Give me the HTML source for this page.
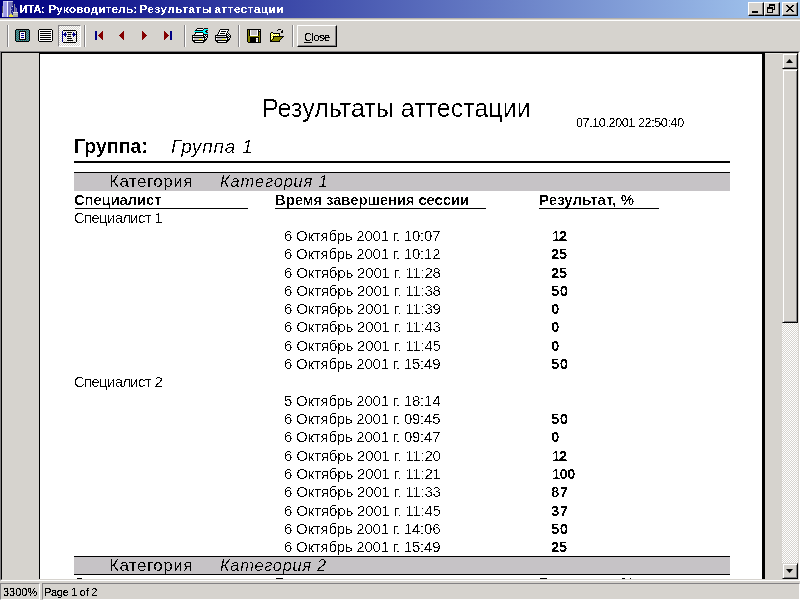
<!DOCTYPE html>
<html><head><meta charset="utf-8"><title>ИТА: Руководитель: Результаты аттестации</title>
<style>
*{margin:0;padding:0;box-sizing:border-box}
html,body{width:800px;height:600px;overflow:hidden;background:#d6d3ce;font-family:"Liberation Sans",sans-serif;}
body{position:relative}
.abs{position:absolute}
#titlebar{left:0;top:0;width:800px;height:18px;background:linear-gradient(90deg,#000080 0%,#a6caf0 100%);}
#title{left:20px;top:3px;color:#fff;font-weight:bold;font-size:11.5px;line-height:13px;white-space:nowrap}
.t,.ui,#title{will-change:transform}
.t{position:absolute;white-space:nowrap;color:#000;line-height:1;margin-top:-0.8465em}
.h1{font-size:25px}
.dt{font-size:12.5px}
.gb{font-size:19.5px;font-weight:bold}
.gi{font-size:19px;font-style:italic}
.cat{font-size:17px}
.cati{font-size:16.5px;font-style:italic}
.hd{font-size:15px;font-weight:bold}
.rg{font-size:15px}
.rb{font-size:15px;font-weight:bold}
.ui{position:absolute;white-space:nowrap;color:#000;font-size:11px;line-height:1;margin-top:-0.8465em}
#page{left:40px;top:54px;width:722px;height:525px;background:#fff}
.wbtn{position:absolute;top:2px;width:16px;height:14px;background:#d6d3ce;border:1px solid;border-color:#fff #000 #000 #fff;box-shadow:inset -1px -1px 0 #848284}
.sep{position:absolute;top:25px;width:2px;height:22px;border-left:1px solid #848284;border-right:1px solid #fff}
.sbtn{position:absolute;left:782px;width:16px;height:16px;background:#d6d3ce;border:1px solid;border-color:#d6d3ce #000 #000 #d6d3ce;box-shadow:inset 1px 1px 0 #fff, inset -1px -1px 0 #848284}
.t{filter:url(#th)}
.ui{filter:url(#th2)}
.t.dt,#title{filter:url(#th3)}
</style></head><body>
<svg width="0" height="0" style="position:absolute"><filter id="th" x="0" y="0" width="100%" height="100%" color-interpolation-filters="sRGB"><feComponentTransfer><feFuncA type="discrete" tableValues="0 0 0 1 1"/></feComponentTransfer></filter><filter id="th2" x="0" y="0" width="100%" height="100%" color-interpolation-filters="sRGB"><feComponentTransfer><feFuncA type="discrete" tableValues="0 0 1 1 1"/></feComponentTransfer></filter><filter id="th3" x="0" y="0" width="100%" height="100%" color-interpolation-filters="sRGB"><feComponentTransfer><feFuncA type="discrete" tableValues="0 1"/></feComponentTransfer></filter></svg>
<!-- title bar -->
<div id="titlebar" class="abs"></div>
<svg class="abs" style="left:0;top:0" width="20" height="18" shape-rendering="crispEdges">
<rect x="3" y="1" width="10" height="1" fill="#c6c7e7"/>
<rect x="3" y="2" width="4" height="15" fill="#9c9ae7"/>
<rect x="2" y="6" width="1" height="7" fill="#52515a"/>
<rect x="2" y="13" width="1" height="4" fill="#d6d7de"/>
<rect x="3" y="2" width="1" height="15" fill="#b5b6ef"/>
<rect x="7" y="1" width="1" height="16" fill="#f7f7ff"/>
<rect x="8" y="2" width="4" height="15" fill="#7371bd"/>
<rect x="12" y="2" width="1" height="5" fill="#52518c"/>
<rect x="10" y="7" width="3" height="8" fill="#21248c"/>
<rect x="10" y="7" width="1" height="8" fill="#9c9ece"/>
<rect x="12" y="6" width="1" height="1" fill="#dedfef"/>
<rect x="11" y="9" width="1" height="1" fill="#8c8ec6"/><rect x="12" y="11" width="1" height="1" fill="#8c8ec6"/><rect x="11" y="13" width="1" height="1" fill="#8c8ec6"/>
<rect x="9" y="15" width="4" height="2" fill="#e7e339"/><rect x="10" y="14" width="2" height="1" fill="#d6d34a"/>
<rect x="14" y="4" width="1" height="8" fill="#8c8a9c"/>
<rect x="15" y="7" width="1" height="5" fill="#5a59a5"/><rect x="16" y="8" width="1" height="4" fill="#7b79b5"/>
<rect x="13" y="12" width="5" height="1" fill="#e7e7e7"/>
<rect x="13" y="13" width="5" height="4" fill="#a5a6a5"/>
<rect x="13" y="14" width="5" height="1" fill="#bdbebd"/>
</svg>
<div id="title" class="abs"><span class="abs" style="left:-0.5px;letter-spacing:-.42px">ИТА: </span><span class="abs" style="left:28.4px;letter-spacing:.31px">Руководитель: </span><span class="abs" style="left:119.4px;letter-spacing:.67px">Результаты </span><span class="abs" style="left:194.5px;letter-spacing:.6px">аттестации</span></div>
<div class="wbtn" style="left:748px"><div class="abs" style="left:3px;top:8px;width:6px;height:2px;background:#000"></div></div>
<div class="wbtn" style="left:764px">
  <div class="abs" style="left:4px;top:1px;width:6px;height:6px;border:1px solid #000;border-top-width:2px"></div>
  <div class="abs" style="left:2px;top:4px;width:6px;height:6px;border:1px solid #000;border-top-width:2px;background:#d6d3ce"></div>
</div>
<div class="wbtn" style="left:782px"><svg class="abs" style="left:3px;top:2px" width="8" height="7" shape-rendering="crispEdges" fill="#000"><rect x="0" y="0" width="2" height="1"/><rect x="6" y="0" width="2" height="1"/><rect x="1" y="1" width="2" height="1"/><rect x="5" y="1" width="2" height="1"/><rect x="2" y="2" width="4" height="1"/><rect x="3" y="3" width="2" height="1"/><rect x="2" y="4" width="4" height="1"/><rect x="1" y="5" width="2" height="1"/><rect x="5" y="5" width="2" height="1"/><rect x="0" y="6" width="2" height="1"/><rect x="6" y="6" width="2" height="1"/></svg></div>
<div class="abs" style="left:0;top:18px;width:800px;height:1px;background:#b5b2ad"></div>
<div class="abs" style="left:0;top:19px;width:800px;height:1px;background:#d6d3ce"></div>
<div class="abs" style="left:0;top:20px;width:800px;height:1px;background:#fff"></div>
<!-- toolbar -->
<div class="sep" style="left:7px"></div>
<div class="sep" style="left:84px"></div>
<div class="sep" style="left:184px"></div>
<div class="sep" style="left:238px"></div>
<div class="sep" style="left:292px"></div>
<div class="abs" style="left:58px;top:25px;width:23px;height:22px;border:1px solid;border-color:#848284 #fff #fff #848284;background:repeating-conic-gradient(#fff 0% 25%,#d6d3ce 0% 50%) 0 0/2px 2px"></div><svg class="abs" style="left:15px;top:29px" width="15" height="13" shape-rendering="crispEdges"><rect x="1" y="0" width="13" height="1" fill="#000"/><rect x="0" y="1" width="1" height="1" fill="#000"/><rect x="1" y="1" width="1" height="1" fill="#008284"/><rect x="2" y="1" width="1" height="1" fill="#848284"/><rect x="3" y="1" width="1" height="1" fill="#008284"/><rect x="4" y="1" width="1" height="1" fill="#848284"/><rect x="5" y="1" width="1" height="1" fill="#008284"/><rect x="6" y="1" width="1" height="1" fill="#848284"/><rect x="7" y="1" width="1" height="1" fill="#008284"/><rect x="8" y="1" width="1" height="1" fill="#848284"/><rect x="9" y="1" width="1" height="1" fill="#008284"/><rect x="10" y="1" width="1" height="1" fill="#848284"/><rect x="11" y="1" width="1" height="1" fill="#008284"/><rect x="12" y="1" width="1" height="1" fill="#848284"/><rect x="13" y="1" width="1" height="1" fill="#008284"/><rect x="14" y="1" width="1" height="1" fill="#000"/><rect x="0" y="2" width="1" height="1" fill="#000"/><rect x="1" y="2" width="1" height="1" fill="#848284"/><rect x="2" y="2" width="1" height="1" fill="#008284"/><rect x="3" y="2" width="1" height="1" fill="#848284"/><rect x="4" y="2" width="7" height="1" fill="#000"/><rect x="11" y="2" width="1" height="1" fill="#848284"/><rect x="12" y="2" width="1" height="1" fill="#008284"/><rect x="13" y="2" width="1" height="1" fill="#848284"/><rect x="14" y="2" width="1" height="1" fill="#000"/><rect x="0" y="3" width="1" height="1" fill="#000"/><rect x="1" y="3" width="1" height="1" fill="#008284"/><rect x="2" y="3" width="1" height="1" fill="#848284"/><rect x="3" y="3" width="1" height="1" fill="#008284"/><rect x="4" y="3" width="1" height="1" fill="#000"/><rect x="5" y="3" width="5" height="1" fill="#fff"/><rect x="10" y="3" width="1" height="1" fill="#000"/><rect x="11" y="3" width="1" height="1" fill="#008284"/><rect x="12" y="3" width="1" height="1" fill="#848284"/><rect x="13" y="3" width="1" height="1" fill="#008284"/><rect x="14" y="3" width="1" height="1" fill="#000"/><rect x="0" y="4" width="1" height="1" fill="#000"/><rect x="1" y="4" width="1" height="1" fill="#848284"/><rect x="2" y="4" width="1" height="1" fill="#008284"/><rect x="3" y="4" width="1" height="1" fill="#848284"/><rect x="4" y="4" width="1" height="1" fill="#000"/><rect x="5" y="4" width="1" height="1" fill="#fff"/><rect x="6" y="4" width="3" height="1" fill="#000084"/><rect x="9" y="4" width="1" height="1" fill="#fff"/><rect x="10" y="4" width="1" height="1" fill="#000"/><rect x="11" y="4" width="1" height="1" fill="#848284"/><rect x="12" y="4" width="1" height="1" fill="#008284"/><rect x="13" y="4" width="1" height="1" fill="#848284"/><rect x="14" y="4" width="1" height="1" fill="#000"/><rect x="0" y="5" width="1" height="1" fill="#000"/><rect x="1" y="5" width="1" height="1" fill="#008284"/><rect x="2" y="5" width="1" height="1" fill="#848284"/><rect x="3" y="5" width="1" height="1" fill="#008284"/><rect x="4" y="5" width="1" height="1" fill="#000"/><rect x="5" y="5" width="5" height="1" fill="#fff"/><rect x="10" y="5" width="1" height="1" fill="#000"/><rect x="11" y="5" width="1" height="1" fill="#008284"/><rect x="12" y="5" width="1" height="1" fill="#848284"/><rect x="13" y="5" width="1" height="1" fill="#008284"/><rect x="14" y="5" width="1" height="1" fill="#000"/><rect x="0" y="6" width="1" height="1" fill="#000"/><rect x="1" y="6" width="1" height="1" fill="#848284"/><rect x="2" y="6" width="1" height="1" fill="#008284"/><rect x="3" y="6" width="1" height="1" fill="#848284"/><rect x="4" y="6" width="1" height="1" fill="#000"/><rect x="5" y="6" width="1" height="1" fill="#fff"/><rect x="6" y="6" width="3" height="1" fill="#000084"/><rect x="9" y="6" width="1" height="1" fill="#fff"/><rect x="10" y="6" width="1" height="1" fill="#000"/><rect x="11" y="6" width="1" height="1" fill="#848284"/><rect x="12" y="6" width="1" height="1" fill="#008284"/><rect x="13" y="6" width="1" height="1" fill="#848284"/><rect x="14" y="6" width="1" height="1" fill="#000"/><rect x="0" y="7" width="1" height="1" fill="#000"/><rect x="1" y="7" width="1" height="1" fill="#008284"/><rect x="2" y="7" width="1" height="1" fill="#848284"/><rect x="3" y="7" width="1" height="1" fill="#008284"/><rect x="4" y="7" width="1" height="1" fill="#000"/><rect x="5" y="7" width="5" height="1" fill="#fff"/><rect x="10" y="7" width="1" height="1" fill="#000"/><rect x="11" y="7" width="1" height="1" fill="#008284"/><rect x="12" y="7" width="1" height="1" fill="#848284"/><rect x="13" y="7" width="1" height="1" fill="#008284"/><rect x="14" y="7" width="1" height="1" fill="#000"/><rect x="0" y="8" width="1" height="1" fill="#000"/><rect x="1" y="8" width="1" height="1" fill="#848284"/><rect x="2" y="8" width="1" height="1" fill="#008284"/><rect x="3" y="8" width="1" height="1" fill="#848284"/><rect x="4" y="8" width="1" height="1" fill="#000"/><rect x="5" y="8" width="1" height="1" fill="#fff"/><rect x="6" y="8" width="3" height="1" fill="#000084"/><rect x="9" y="8" width="1" height="1" fill="#fff"/><rect x="10" y="8" width="1" height="1" fill="#000"/><rect x="11" y="8" width="1" height="1" fill="#848284"/><rect x="12" y="8" width="1" height="1" fill="#008284"/><rect x="13" y="8" width="1" height="1" fill="#848284"/><rect x="14" y="8" width="1" height="1" fill="#000"/><rect x="0" y="9" width="1" height="1" fill="#000"/><rect x="1" y="9" width="1" height="1" fill="#008284"/><rect x="2" y="9" width="1" height="1" fill="#848284"/><rect x="3" y="9" width="1" height="1" fill="#008284"/><rect x="4" y="9" width="1" height="1" fill="#000"/><rect x="5" y="9" width="5" height="1" fill="#fff"/><rect x="10" y="9" width="1" height="1" fill="#000"/><rect x="11" y="9" width="1" height="1" fill="#008284"/><rect x="12" y="9" width="1" height="1" fill="#848284"/><rect x="13" y="9" width="1" height="1" fill="#008284"/><rect x="14" y="9" width="1" height="1" fill="#000"/><rect x="0" y="10" width="1" height="1" fill="#000"/><rect x="1" y="10" width="1" height="1" fill="#848284"/><rect x="2" y="10" width="1" height="1" fill="#008284"/><rect x="3" y="10" width="1" height="1" fill="#848284"/><rect x="4" y="10" width="7" height="1" fill="#000"/><rect x="11" y="10" width="1" height="1" fill="#848284"/><rect x="12" y="10" width="1" height="1" fill="#008284"/><rect x="13" y="10" width="1" height="1" fill="#848284"/><rect x="14" y="10" width="1" height="1" fill="#000"/><rect x="0" y="11" width="1" height="1" fill="#000"/><rect x="1" y="11" width="1" height="1" fill="#008284"/><rect x="2" y="11" width="1" height="1" fill="#848284"/><rect x="3" y="11" width="1" height="1" fill="#008284"/><rect x="4" y="11" width="1" height="1" fill="#848284"/><rect x="5" y="11" width="1" height="1" fill="#008284"/><rect x="6" y="11" width="1" height="1" fill="#848284"/><rect x="7" y="11" width="1" height="1" fill="#008284"/><rect x="8" y="11" width="1" height="1" fill="#848284"/><rect x="9" y="11" width="1" height="1" fill="#008284"/><rect x="10" y="11" width="1" height="1" fill="#848284"/><rect x="11" y="11" width="1" height="1" fill="#008284"/><rect x="12" y="11" width="1" height="1" fill="#848284"/><rect x="13" y="11" width="1" height="1" fill="#008284"/><rect x="14" y="11" width="1" height="1" fill="#000"/><rect x="1" y="12" width="13" height="1" fill="#000"/></svg><svg class="abs" style="left:38px;top:29px" width="15" height="13" shape-rendering="crispEdges"><rect x="1" y="0" width="13" height="1" fill="#000"/><rect x="0" y="1" width="1" height="1" fill="#000"/><rect x="1" y="1" width="13" height="1" fill="#fff"/><rect x="14" y="1" width="1" height="1" fill="#000"/><rect x="0" y="2" width="1" height="1" fill="#000"/><rect x="1" y="2" width="1" height="1" fill="#fff"/><rect x="2" y="2" width="11" height="1" fill="#000"/><rect x="13" y="2" width="1" height="1" fill="#fff"/><rect x="14" y="2" width="1" height="1" fill="#000"/><rect x="0" y="3" width="1" height="1" fill="#000"/><rect x="1" y="3" width="13" height="1" fill="#fff"/><rect x="14" y="3" width="1" height="1" fill="#000"/><rect x="0" y="4" width="1" height="1" fill="#000"/><rect x="1" y="4" width="1" height="1" fill="#fff"/><rect x="2" y="4" width="11" height="1" fill="#000"/><rect x="13" y="4" width="1" height="1" fill="#fff"/><rect x="14" y="4" width="1" height="1" fill="#000"/><rect x="0" y="5" width="1" height="1" fill="#000"/><rect x="1" y="5" width="13" height="1" fill="#fff"/><rect x="14" y="5" width="1" height="1" fill="#000"/><rect x="0" y="6" width="1" height="1" fill="#000"/><rect x="1" y="6" width="1" height="1" fill="#fff"/><rect x="2" y="6" width="11" height="1" fill="#000"/><rect x="13" y="6" width="1" height="1" fill="#fff"/><rect x="14" y="6" width="1" height="1" fill="#000"/><rect x="0" y="7" width="1" height="1" fill="#000"/><rect x="1" y="7" width="13" height="1" fill="#fff"/><rect x="14" y="7" width="1" height="1" fill="#000"/><rect x="0" y="8" width="1" height="1" fill="#000"/><rect x="1" y="8" width="1" height="1" fill="#fff"/><rect x="2" y="8" width="11" height="1" fill="#000"/><rect x="13" y="8" width="1" height="1" fill="#fff"/><rect x="14" y="8" width="1" height="1" fill="#000"/><rect x="0" y="9" width="1" height="1" fill="#000"/><rect x="1" y="9" width="13" height="1" fill="#fff"/><rect x="14" y="9" width="1" height="1" fill="#000"/><rect x="0" y="10" width="1" height="1" fill="#000"/><rect x="1" y="10" width="1" height="1" fill="#fff"/><rect x="2" y="10" width="11" height="1" fill="#000"/><rect x="13" y="10" width="1" height="1" fill="#fff"/><rect x="14" y="10" width="1" height="1" fill="#000"/><rect x="0" y="11" width="1" height="1" fill="#000"/><rect x="1" y="11" width="13" height="1" fill="#fff"/><rect x="14" y="11" width="1" height="1" fill="#000"/><rect x="1" y="12" width="13" height="1" fill="#000"/></svg><svg class="abs" style="left:62px;top:30px" width="15" height="13" shape-rendering="crispEdges"><rect x="1" y="0" width="13" height="1" fill="#000"/><rect x="0" y="1" width="1" height="1" fill="#000084"/><rect x="14" y="1" width="1" height="1" fill="#000"/><rect x="0" y="2" width="1" height="1" fill="#000084"/><rect x="3" y="2" width="1" height="1" fill="#000084"/><rect x="5" y="2" width="5" height="1" fill="#000"/><rect x="11" y="2" width="1" height="1" fill="#000084"/><rect x="14" y="2" width="1" height="1" fill="#000"/><rect x="0" y="3" width="1" height="1" fill="#000084"/><rect x="2" y="3" width="2" height="1" fill="#000084"/><rect x="11" y="3" width="2" height="1" fill="#000084"/><rect x="14" y="3" width="1" height="1" fill="#000"/><rect x="0" y="4" width="5" height="1" fill="#000084"/><rect x="6" y="4" width="3" height="1" fill="#000"/><rect x="10" y="4" width="4" height="1" fill="#000084"/><rect x="14" y="4" width="1" height="1" fill="#000"/><rect x="0" y="5" width="1" height="1" fill="#000084"/><rect x="2" y="5" width="2" height="1" fill="#000084"/><rect x="11" y="5" width="2" height="1" fill="#000084"/><rect x="14" y="5" width="1" height="1" fill="#000"/><rect x="0" y="6" width="1" height="1" fill="#000084"/><rect x="3" y="6" width="1" height="1" fill="#000084"/><rect x="5" y="6" width="4" height="1" fill="#000"/><rect x="11" y="6" width="1" height="1" fill="#000084"/><rect x="14" y="6" width="1" height="1" fill="#000"/><rect x="0" y="7" width="1" height="1" fill="#000084"/><rect x="14" y="7" width="1" height="1" fill="#000"/><rect x="0" y="8" width="1" height="1" fill="#000084"/><rect x="5" y="8" width="5" height="1" fill="#000"/><rect x="14" y="8" width="1" height="1" fill="#000"/><rect x="0" y="9" width="1" height="1" fill="#000084"/><rect x="14" y="9" width="1" height="1" fill="#000"/><rect x="0" y="10" width="1" height="1" fill="#000084"/><rect x="5" y="10" width="6" height="1" fill="#000"/><rect x="14" y="10" width="1" height="1" fill="#000"/><rect x="0" y="11" width="1" height="1" fill="#000084"/><rect x="14" y="11" width="1" height="1" fill="#000"/><rect x="1" y="12" width="13" height="1" fill="#000"/></svg><svg class="abs" style="left:95px;top:31px" width="8" height="9" shape-rendering="crispEdges"><rect x="0" y="0" width="2" height="1" fill="#000084"/><rect x="7" y="0" width="1" height="1" fill="#840000"/><rect x="0" y="1" width="2" height="1" fill="#000084"/><rect x="6" y="1" width="2" height="1" fill="#840000"/><rect x="0" y="2" width="2" height="1" fill="#000084"/><rect x="5" y="2" width="3" height="1" fill="#840000"/><rect x="0" y="3" width="2" height="1" fill="#000084"/><rect x="4" y="3" width="4" height="1" fill="#840000"/><rect x="0" y="4" width="2" height="1" fill="#000084"/><rect x="3" y="4" width="5" height="1" fill="#840000"/><rect x="0" y="5" width="2" height="1" fill="#000084"/><rect x="4" y="5" width="4" height="1" fill="#840000"/><rect x="0" y="6" width="2" height="1" fill="#000084"/><rect x="5" y="6" width="3" height="1" fill="#840000"/><rect x="0" y="7" width="2" height="1" fill="#000084"/><rect x="6" y="7" width="2" height="1" fill="#840000"/><rect x="0" y="8" width="2" height="1" fill="#000084"/><rect x="7" y="8" width="1" height="1" fill="#840000"/></svg><svg class="abs" style="left:119px;top:31px" width="5" height="9" shape-rendering="crispEdges"><rect x="4" y="0" width="1" height="1" fill="#840000"/><rect x="3" y="1" width="2" height="1" fill="#840000"/><rect x="2" y="2" width="3" height="1" fill="#840000"/><rect x="1" y="3" width="4" height="1" fill="#840000"/><rect x="0" y="4" width="5" height="1" fill="#840000"/><rect x="1" y="5" width="4" height="1" fill="#840000"/><rect x="2" y="6" width="3" height="1" fill="#840000"/><rect x="3" y="7" width="2" height="1" fill="#840000"/><rect x="4" y="8" width="1" height="1" fill="#840000"/></svg><svg class="abs" style="left:142px;top:31px" width="5" height="9" shape-rendering="crispEdges"><rect x="0" y="0" width="1" height="1" fill="#840000"/><rect x="0" y="1" width="2" height="1" fill="#840000"/><rect x="0" y="2" width="3" height="1" fill="#840000"/><rect x="0" y="3" width="4" height="1" fill="#840000"/><rect x="0" y="4" width="5" height="1" fill="#840000"/><rect x="0" y="5" width="4" height="1" fill="#840000"/><rect x="0" y="6" width="3" height="1" fill="#840000"/><rect x="0" y="7" width="2" height="1" fill="#840000"/><rect x="0" y="8" width="1" height="1" fill="#840000"/></svg><svg class="abs" style="left:164px;top:31px" width="8" height="9" shape-rendering="crispEdges"><rect x="0" y="0" width="1" height="1" fill="#840000"/><rect x="6" y="0" width="2" height="1" fill="#000084"/><rect x="0" y="1" width="2" height="1" fill="#840000"/><rect x="6" y="1" width="2" height="1" fill="#000084"/><rect x="0" y="2" width="3" height="1" fill="#840000"/><rect x="6" y="2" width="2" height="1" fill="#000084"/><rect x="0" y="3" width="4" height="1" fill="#840000"/><rect x="6" y="3" width="2" height="1" fill="#000084"/><rect x="0" y="4" width="5" height="1" fill="#840000"/><rect x="6" y="4" width="2" height="1" fill="#000084"/><rect x="0" y="5" width="4" height="1" fill="#840000"/><rect x="6" y="5" width="2" height="1" fill="#000084"/><rect x="0" y="6" width="3" height="1" fill="#840000"/><rect x="6" y="6" width="2" height="1" fill="#000084"/><rect x="0" y="7" width="2" height="1" fill="#840000"/><rect x="6" y="7" width="2" height="1" fill="#000084"/><rect x="0" y="8" width="1" height="1" fill="#840000"/><rect x="6" y="8" width="2" height="1" fill="#000084"/></svg><svg class="abs" style="left:192px;top:28px" width="16" height="15" shape-rendering="crispEdges"><rect x="5" y="0" width="6" height="1" fill="#000"/><rect x="12" y="0" width="4" height="1" fill="#310000"/><rect x="4" y="1" width="1" height="1" fill="#000"/><rect x="5" y="1" width="6" height="1" fill="#fff"/><rect x="11" y="1" width="1" height="1" fill="#310000"/><rect x="12" y="1" width="4" height="1" fill="#00ffff"/><rect x="3" y="2" width="8" height="1" fill="#000"/><rect x="11" y="2" width="3" height="1" fill="#00ffff"/><rect x="14" y="2" width="2" height="1" fill="#310000"/><rect x="2" y="3" width="11" height="1" fill="#00ffff"/><rect x="13" y="3" width="2" height="1" fill="#000"/><rect x="3" y="4" width="8" height="1" fill="#000"/><rect x="11" y="4" width="3" height="1" fill="#00ffff"/><rect x="14" y="4" width="2" height="1" fill="#310000"/><rect x="3" y="5" width="1" height="1" fill="#000"/><rect x="4" y="5" width="7" height="1" fill="#fff"/><rect x="11" y="5" width="1" height="1" fill="#310000"/><rect x="12" y="5" width="4" height="1" fill="#00ffff"/><rect x="2" y="6" width="1" height="1" fill="#000"/><rect x="3" y="6" width="8" height="1" fill="#fff"/><rect x="11" y="6" width="2" height="1" fill="#000"/><rect x="13" y="6" width="3" height="1" fill="#310000"/><rect x="0" y="7" width="12" height="1" fill="#000"/><rect x="12" y="7" width="1" height="1" fill="#fff"/><rect x="13" y="7" width="1" height="1" fill="#000"/><rect x="14" y="7" width="1" height="1" fill="#fff"/><rect x="15" y="7" width="1" height="1" fill="#000"/><rect x="0" y="8" width="1" height="1" fill="#000"/><rect x="1" y="8" width="1" height="1" fill="#fff"/><rect x="2" y="8" width="8" height="1" fill="#c6c3c6"/><rect x="10" y="8" width="1" height="1" fill="#fff"/><rect x="11" y="8" width="2" height="1" fill="#000"/><rect x="13" y="8" width="1" height="1" fill="#fff"/><rect x="14" y="8" width="2" height="1" fill="#000"/><rect x="0" y="9" width="14" height="1" fill="#000"/><rect x="14" y="9" width="1" height="1" fill="#fff"/><rect x="15" y="9" width="1" height="1" fill="#000"/><rect x="0" y="10" width="1" height="1" fill="#000"/><rect x="1" y="10" width="1" height="1" fill="#fff"/><rect x="2" y="10" width="9" height="1" fill="#c6c3c6"/><rect x="11" y="10" width="1" height="1" fill="#fff"/><rect x="12" y="10" width="1" height="1" fill="#000"/><rect x="13" y="10" width="1" height="1" fill="#fff"/><rect x="14" y="10" width="1" height="1" fill="#000"/><rect x="0" y="11" width="1" height="1" fill="#000"/><rect x="1" y="11" width="1" height="1" fill="#fff"/><rect x="2" y="11" width="5" height="1" fill="#c6c3c6"/><rect x="7" y="11" width="3" height="1" fill="#ffff00"/><rect x="10" y="11" width="1" height="1" fill="#c6c3c6"/><rect x="11" y="11" width="1" height="1" fill="#fff"/><rect x="12" y="11" width="3" height="1" fill="#000"/><rect x="0" y="12" width="14" height="1" fill="#000"/><rect x="1" y="13" width="2" height="1" fill="#000"/><rect x="3" y="13" width="8" height="1" fill="#fff"/><rect x="11" y="13" width="2" height="1" fill="#000"/><rect x="2" y="14" width="10" height="1" fill="#000"/></svg><svg class="abs" style="left:215px;top:29px" width="16" height="14" shape-rendering="crispEdges"><rect x="5" y="0" width="9" height="1" fill="#000"/><rect x="4" y="1" width="1" height="1" fill="#000"/><rect x="5" y="1" width="8" height="1" fill="#fff"/><rect x="13" y="1" width="1" height="1" fill="#000"/><rect x="4" y="2" width="1" height="1" fill="#000"/><rect x="5" y="2" width="1" height="1" fill="#fff"/><rect x="6" y="2" width="5" height="1" fill="#000"/><rect x="11" y="2" width="1" height="1" fill="#fff"/><rect x="12" y="2" width="1" height="1" fill="#000"/><rect x="3" y="3" width="1" height="1" fill="#000"/><rect x="4" y="3" width="8" height="1" fill="#fff"/><rect x="12" y="3" width="1" height="1" fill="#000"/><rect x="3" y="4" width="1" height="1" fill="#000"/><rect x="4" y="4" width="1" height="1" fill="#fff"/><rect x="5" y="4" width="5" height="1" fill="#000"/><rect x="10" y="4" width="1" height="1" fill="#fff"/><rect x="11" y="4" width="1" height="1" fill="#000"/><rect x="12" y="4" width="1" height="1" fill="#fff"/><rect x="13" y="4" width="1" height="1" fill="#000"/><rect x="2" y="5" width="1" height="1" fill="#000"/><rect x="3" y="5" width="8" height="1" fill="#fff"/><rect x="11" y="5" width="2" height="1" fill="#000"/><rect x="13" y="5" width="1" height="1" fill="#fff"/><rect x="14" y="5" width="1" height="1" fill="#000"/><rect x="0" y="6" width="12" height="1" fill="#000"/><rect x="12" y="6" width="1" height="1" fill="#fff"/><rect x="13" y="6" width="1" height="1" fill="#000"/><rect x="14" y="6" width="1" height="1" fill="#fff"/><rect x="15" y="6" width="1" height="1" fill="#000"/><rect x="0" y="7" width="1" height="1" fill="#000"/><rect x="1" y="7" width="1" height="1" fill="#fff"/><rect x="2" y="7" width="8" height="1" fill="#c6c3c6"/><rect x="10" y="7" width="1" height="1" fill="#fff"/><rect x="11" y="7" width="2" height="1" fill="#000"/><rect x="13" y="7" width="1" height="1" fill="#fff"/><rect x="14" y="7" width="2" height="1" fill="#000"/><rect x="0" y="8" width="14" height="1" fill="#000"/><rect x="14" y="8" width="1" height="1" fill="#fff"/><rect x="15" y="8" width="1" height="1" fill="#000"/><rect x="0" y="9" width="1" height="1" fill="#000"/><rect x="1" y="9" width="1" height="1" fill="#fff"/><rect x="2" y="9" width="9" height="1" fill="#c6c3c6"/><rect x="11" y="9" width="1" height="1" fill="#fff"/><rect x="12" y="9" width="1" height="1" fill="#000"/><rect x="13" y="9" width="1" height="1" fill="#fff"/><rect x="14" y="9" width="1" height="1" fill="#000"/><rect x="0" y="10" width="1" height="1" fill="#000"/><rect x="1" y="10" width="1" height="1" fill="#fff"/><rect x="2" y="10" width="5" height="1" fill="#c6c3c6"/><rect x="7" y="10" width="3" height="1" fill="#ffff00"/><rect x="10" y="10" width="1" height="1" fill="#c6c3c6"/><rect x="11" y="10" width="1" height="1" fill="#fff"/><rect x="12" y="10" width="3" height="1" fill="#000"/><rect x="0" y="11" width="14" height="1" fill="#000"/><rect x="1" y="12" width="2" height="1" fill="#000"/><rect x="3" y="12" width="8" height="1" fill="#fff"/><rect x="11" y="12" width="2" height="1" fill="#000"/><rect x="2" y="13" width="10" height="1" fill="#000"/></svg><svg class="abs" style="left:247px;top:29px" width="14" height="14" shape-rendering="crispEdges"><rect x="0" y="0" width="14" height="1" fill="#000"/><rect x="0" y="1" width="1" height="1" fill="#000"/><rect x="1" y="1" width="1" height="1" fill="#848200"/><rect x="2" y="1" width="1" height="1" fill="#000"/><rect x="3" y="1" width="1" height="1" fill="#fff"/><rect x="4" y="1" width="6" height="1" fill="#c6c3c6"/><rect x="10" y="1" width="1" height="1" fill="#fff"/><rect x="11" y="1" width="1" height="1" fill="#000"/><rect x="12" y="1" width="1" height="1" fill="#fff"/><rect x="13" y="1" width="1" height="1" fill="#000"/><rect x="0" y="2" width="1" height="1" fill="#000"/><rect x="1" y="2" width="1" height="1" fill="#848200"/><rect x="2" y="2" width="1" height="1" fill="#000"/><rect x="3" y="2" width="1" height="1" fill="#fff"/><rect x="4" y="2" width="6" height="1" fill="#c6c3c6"/><rect x="10" y="2" width="1" height="1" fill="#fff"/><rect x="11" y="2" width="3" height="1" fill="#000"/><rect x="0" y="3" width="1" height="1" fill="#000"/><rect x="1" y="3" width="1" height="1" fill="#848200"/><rect x="2" y="3" width="1" height="1" fill="#000"/><rect x="3" y="3" width="1" height="1" fill="#fff"/><rect x="4" y="3" width="6" height="1" fill="#c6c3c6"/><rect x="10" y="3" width="1" height="1" fill="#fff"/><rect x="11" y="3" width="1" height="1" fill="#000"/><rect x="12" y="3" width="1" height="1" fill="#848200"/><rect x="13" y="3" width="1" height="1" fill="#000"/><rect x="0" y="4" width="1" height="1" fill="#000"/><rect x="1" y="4" width="1" height="1" fill="#848200"/><rect x="2" y="4" width="1" height="1" fill="#000"/><rect x="3" y="4" width="1" height="1" fill="#fff"/><rect x="4" y="4" width="6" height="1" fill="#c6c3c6"/><rect x="10" y="4" width="1" height="1" fill="#fff"/><rect x="11" y="4" width="1" height="1" fill="#000"/><rect x="12" y="4" width="1" height="1" fill="#848200"/><rect x="13" y="4" width="1" height="1" fill="#000"/><rect x="0" y="5" width="1" height="1" fill="#000"/><rect x="1" y="5" width="1" height="1" fill="#848200"/><rect x="2" y="5" width="1" height="1" fill="#000"/><rect x="3" y="5" width="1" height="1" fill="#fff"/><rect x="4" y="5" width="6" height="1" fill="#c6c3c6"/><rect x="10" y="5" width="1" height="1" fill="#fff"/><rect x="11" y="5" width="1" height="1" fill="#000"/><rect x="12" y="5" width="1" height="1" fill="#848200"/><rect x="13" y="5" width="1" height="1" fill="#000"/><rect x="0" y="6" width="1" height="1" fill="#000"/><rect x="1" y="6" width="1" height="1" fill="#848200"/><rect x="2" y="6" width="1" height="1" fill="#000"/><rect x="3" y="6" width="8" height="1" fill="#fff"/><rect x="11" y="6" width="1" height="1" fill="#000"/><rect x="12" y="6" width="1" height="1" fill="#848200"/><rect x="13" y="6" width="1" height="1" fill="#000"/><rect x="0" y="7" width="1" height="1" fill="#000"/><rect x="1" y="7" width="12" height="1" fill="#848200"/><rect x="13" y="7" width="1" height="1" fill="#000"/><rect x="0" y="8" width="1" height="1" fill="#000"/><rect x="1" y="8" width="2" height="1" fill="#848200"/><rect x="3" y="8" width="9" height="1" fill="#000"/><rect x="12" y="8" width="1" height="1" fill="#848200"/><rect x="13" y="8" width="1" height="1" fill="#000"/><rect x="0" y="9" width="1" height="1" fill="#000"/><rect x="1" y="9" width="2" height="1" fill="#848200"/><rect x="3" y="9" width="6" height="1" fill="#000"/><rect x="9" y="9" width="2" height="1" fill="#fff"/><rect x="11" y="9" width="1" height="1" fill="#000"/><rect x="12" y="9" width="1" height="1" fill="#848200"/><rect x="13" y="9" width="1" height="1" fill="#000"/><rect x="0" y="10" width="1" height="1" fill="#000"/><rect x="1" y="10" width="2" height="1" fill="#848200"/><rect x="3" y="10" width="6" height="1" fill="#000"/><rect x="9" y="10" width="2" height="1" fill="#c6c3c6"/><rect x="11" y="10" width="1" height="1" fill="#000"/><rect x="12" y="10" width="1" height="1" fill="#848200"/><rect x="13" y="10" width="1" height="1" fill="#000"/><rect x="0" y="11" width="1" height="1" fill="#000"/><rect x="1" y="11" width="2" height="1" fill="#848200"/><rect x="3" y="11" width="6" height="1" fill="#000"/><rect x="9" y="11" width="2" height="1" fill="#fff"/><rect x="11" y="11" width="1" height="1" fill="#000"/><rect x="12" y="11" width="1" height="1" fill="#848200"/><rect x="13" y="11" width="1" height="1" fill="#000"/><rect x="0" y="12" width="1" height="1" fill="#000"/><rect x="1" y="12" width="2" height="1" fill="#848200"/><rect x="3" y="12" width="6" height="1" fill="#000"/><rect x="9" y="12" width="2" height="1" fill="#fff"/><rect x="11" y="12" width="1" height="1" fill="#000"/><rect x="12" y="12" width="1" height="1" fill="#848200"/><rect x="13" y="12" width="1" height="1" fill="#000"/><rect x="1" y="13" width="13" height="1" fill="#000"/></svg><svg class="abs" style="left:270px;top:29px" width="15" height="13" shape-rendering="crispEdges"><rect x="8" y="0" width="3" height="1" fill="#000"/><rect x="7" y="1" width="1" height="1" fill="#000"/><rect x="12" y="1" width="1" height="1" fill="#000"/><rect x="11" y="2" width="2" height="1" fill="#000"/><rect x="1" y="3" width="2" height="1" fill="#000"/><rect x="11" y="3" width="2" height="1" fill="#000"/><rect x="0" y="4" width="1" height="1" fill="#000"/><rect x="1" y="4" width="1" height="1" fill="#ffff00"/><rect x="2" y="4" width="1" height="1" fill="#fff"/><rect x="3" y="4" width="7" height="1" fill="#000"/><rect x="0" y="5" width="1" height="1" fill="#000"/><rect x="1" y="5" width="1" height="1" fill="#fff"/><rect x="2" y="5" width="1" height="1" fill="#ffff00"/><rect x="3" y="5" width="1" height="1" fill="#fff"/><rect x="4" y="5" width="1" height="1" fill="#ffff00"/><rect x="5" y="5" width="1" height="1" fill="#fff"/><rect x="6" y="5" width="1" height="1" fill="#ffff00"/><rect x="7" y="5" width="1" height="1" fill="#fff"/><rect x="8" y="5" width="1" height="1" fill="#ffff00"/><rect x="9" y="5" width="1" height="1" fill="#000"/><rect x="0" y="6" width="1" height="1" fill="#000"/><rect x="1" y="6" width="1" height="1" fill="#ffff00"/><rect x="2" y="6" width="1" height="1" fill="#fff"/><rect x="3" y="6" width="1" height="1" fill="#ffff00"/><rect x="4" y="6" width="1" height="1" fill="#fff"/><rect x="5" y="6" width="1" height="1" fill="#ffff00"/><rect x="6" y="6" width="1" height="1" fill="#fff"/><rect x="7" y="6" width="1" height="1" fill="#ffff00"/><rect x="8" y="6" width="1" height="1" fill="#fff"/><rect x="9" y="6" width="1" height="1" fill="#000"/><rect x="0" y="7" width="1" height="1" fill="#000"/><rect x="1" y="7" width="1" height="1" fill="#fff"/><rect x="2" y="7" width="1" height="1" fill="#ffff00"/><rect x="3" y="7" width="11" height="1" fill="#000"/><rect x="0" y="8" width="1" height="1" fill="#000"/><rect x="1" y="8" width="1" height="1" fill="#ffff00"/><rect x="2" y="8" width="1" height="1" fill="#fff"/><rect x="3" y="8" width="1" height="1" fill="#000"/><rect x="4" y="8" width="8" height="1" fill="#848200"/><rect x="12" y="8" width="1" height="1" fill="#000"/><rect x="0" y="9" width="1" height="1" fill="#000"/><rect x="1" y="9" width="1" height="1" fill="#fff"/><rect x="2" y="9" width="1" height="1" fill="#ffff00"/><rect x="3" y="9" width="1" height="1" fill="#000"/><rect x="4" y="9" width="7" height="1" fill="#848200"/><rect x="11" y="9" width="1" height="1" fill="#000"/><rect x="0" y="10" width="1" height="1" fill="#000"/><rect x="1" y="10" width="1" height="1" fill="#ffff00"/><rect x="2" y="10" width="1" height="1" fill="#000"/><rect x="3" y="10" width="7" height="1" fill="#848200"/><rect x="10" y="10" width="1" height="1" fill="#000"/><rect x="0" y="11" width="2" height="1" fill="#000"/><rect x="2" y="11" width="7" height="1" fill="#848200"/><rect x="9" y="11" width="1" height="1" fill="#000"/><rect x="0" y="12" width="10" height="1" fill="#000"/></svg>
<div class="abs" style="left:297px;top:25px;width:40px;height:22px;border:1px solid;border-color:#fff #000 #000 #fff;box-shadow:inset -1px -1px 0 #848284"></div>
<span class="ui" style="left:304px;top:41px;letter-spacing:-.5px"><u>C</u>lose</span>
<!-- preview frame -->
<div class="abs" style="left:0;top:51px;width:800px;height:530px;border:1px solid;border-color:#848284 #fff #fff #848284"></div>
<div class="abs" style="left:1px;top:52px;width:798px;height:528px;border:1px solid;border-color:#000 #d6d3ce #d6d3ce #000"></div>
<div class="abs" style="left:39px;top:53px;width:726px;height:526px;background:#000"></div>
<div id="page" class="abs"></div>
<div class="abs" style="left:765px;top:53px;width:17px;height:1px;background:#e7e5e1"></div>
<!-- scrollbar -->
<div class="abs" style="left:782px;top:53px;width:16px;height:526px;background:repeating-conic-gradient(#fff 0% 25%,#d6d3ce 0% 50%) 0 0/2px 2px"></div>
<div class="sbtn" style="top:53px"><svg class="abs" style="left:3px;top:5px" width="7" height="4"><path d="M3.5 0L7 4H0z" fill="#000"/></svg></div>
<div class="sbtn" style="top:69px;height:254px"></div>
<div class="sbtn" style="top:563px"><svg class="abs" style="left:3px;top:5px" width="7" height="4"><path d="M0 0h7L3.5 4z" fill="#000"/></svg></div>
<!-- document -->
<div class="abs" style="left:40px;top:54px;width:722px;height:525px;overflow:hidden"><div class="abs" style="left:-40px;top:-54px;width:800px;height:600px">
<div class="abs" style="left:74px;top:161px;width:656px;height:2px;background:#000"></div>
<div class="abs" style="left:74px;top:172px;width:656px;height:1px;background:#000"></div>
<div class="abs" style="left:74px;top:173px;width:656px;height:18px;background:#c6c3c6"></div>
<div class="abs" style="left:75px;top:208px;width:173px;height:1px;background:#000"></div>
<div class="abs" style="left:275px;top:208px;width:211px;height:1px;background:#000"></div>
<div class="abs" style="left:539px;top:208px;width:120px;height:1px;background:#000"></div>
<div class="abs" style="left:74px;top:556px;width:656px;height:1px;background:#000"></div>
<div class="abs" style="left:74px;top:557px;width:656px;height:17px;background:#c6c3c6"></div>
<div class="abs" style="left:74px;top:574px;width:656px;height:1px;background:#000"></div>
<div class="abs" style="left:75px;top:592px;width:173px;height:1px;background:#000"></div>
<div class="abs" style="left:275px;top:592px;width:211px;height:1px;background:#000"></div>
<div class="abs" style="left:539px;top:592px;width:120px;height:1px;background:#000"></div>
<span class="t h1" style="left:262.20px;top:117.00px;letter-spacing:0.020px">Результаты аттестации</span>
<span class="t dt" style="left:576.00px;top:128.00px;letter-spacing:-0.367px">07.10.2001 22:50:40</span>
<span class="t gb" style="left:74.00px;top:153.00px;letter-spacing:0.033px">Группа:</span>
<span class="t gi" style="left:171.00px;top:153.00px;letter-spacing:0.757px">Группа 1</span>
<span class="t cat" style="left:108.80px;top:187.00px;letter-spacing:0.500px">Категория</span>
<span class="t cati" style="left:220.30px;top:187.00px;letter-spacing:0.780px">Категория 1</span>
<span class="t hd" style="left:74.00px;top:205.00px;letter-spacing:-0.233px">Специалист</span>
<span class="t hd" style="left:274.50px;top:205.00px;letter-spacing:-0.173px">Время завершения сессии</span>
<span class="t hd" style="left:539.20px;top:205.00px;letter-spacing:0.082px">Результат, %</span>
<span class="t rg" style="left:74.00px;top:223.00px;letter-spacing:-0.718px">Специалист 1</span>
<span class="t rg" style="left:284.00px;top:241.00px;letter-spacing:-0.245px">6 Октябрь 2001 г. 10:07</span>
<span class="t rb" style="left:551.80px;top:241.00px;letter-spacing:-1.300px">12</span>
<span class="t rg" style="left:284.00px;top:259.00px;letter-spacing:-0.245px">6 Октябрь 2001 г. 10:12</span>
<span class="t rb" style="left:551.20px;top:259.00px;letter-spacing:-0.500px">25</span>
<span class="t rg" style="left:284.00px;top:278.00px;letter-spacing:-0.173px">6 Октябрь 2001 г. 11:28</span>
<span class="t rb" style="left:551.20px;top:278.00px;letter-spacing:-0.500px">25</span>
<span class="t rg" style="left:284.00px;top:296.00px;letter-spacing:-0.173px">6 Октябрь 2001 г. 11:38</span>
<span class="t rb" style="left:551.20px;top:296.00px;letter-spacing:0.300px">50</span>
<span class="t rg" style="left:284.00px;top:314.00px;letter-spacing:-0.173px">6 Октябрь 2001 г. 11:39</span>
<span class="t rb" style="left:551.20px;top:314.00px;letter-spacing:0.300px">0</span>
<span class="t rg" style="left:284.00px;top:332.00px;letter-spacing:-0.173px">6 Октябрь 2001 г. 11:43</span>
<span class="t rb" style="left:551.20px;top:332.00px;letter-spacing:0.300px">0</span>
<span class="t rg" style="left:284.00px;top:351.00px;letter-spacing:-0.173px">6 Октябрь 2001 г. 11:45</span>
<span class="t rb" style="left:551.20px;top:351.00px;letter-spacing:0.300px">0</span>
<span class="t rg" style="left:284.00px;top:369.00px;letter-spacing:-0.245px">6 Октябрь 2001 г. 15:49</span>
<span class="t rb" style="left:551.20px;top:369.00px;letter-spacing:0.300px">50</span>
<span class="t rg" style="left:74.00px;top:387.00px;letter-spacing:-0.718px">Специалист 2</span>
<span class="t rg" style="left:284.00px;top:406.00px;letter-spacing:-0.245px">5 Октябрь 2001 г. 18:14</span>
<span class="t rg" style="left:284.00px;top:424.00px;letter-spacing:-0.245px">6 Октябрь 2001 г. 09:45</span>
<span class="t rb" style="left:551.20px;top:424.00px;letter-spacing:0.300px">50</span>
<span class="t rg" style="left:284.00px;top:442.00px;letter-spacing:-0.245px">6 Октябрь 2001 г. 09:47</span>
<span class="t rb" style="left:551.20px;top:442.00px;letter-spacing:0.300px">0</span>
<span class="t rg" style="left:284.00px;top:461.00px;letter-spacing:-0.173px">6 Октябрь 2001 г. 11:20</span>
<span class="t rb" style="left:551.80px;top:461.00px;letter-spacing:-1.300px">12</span>
<span class="t rg" style="left:284.00px;top:479.00px;letter-spacing:-0.173px">6 Октябрь 2001 г. 11:21</span>
<span class="t rb" style="left:551.80px;top:479.00px;letter-spacing:-0.900px">100</span>
<span class="t rg" style="left:284.00px;top:497.00px;letter-spacing:-0.173px">6 Октябрь 2001 г. 11:33</span>
<span class="t rb" style="left:551.20px;top:497.00px;letter-spacing:0.300px">87</span>
<span class="t rg" style="left:284.00px;top:516.00px;letter-spacing:-0.173px">6 Октябрь 2001 г. 11:45</span>
<span class="t rb" style="left:551.20px;top:516.00px;letter-spacing:0.300px">37</span>
<span class="t rg" style="left:284.00px;top:534.00px;letter-spacing:-0.245px">6 Октябрь 2001 г. 14:06</span>
<span class="t rb" style="left:551.20px;top:534.00px;letter-spacing:0.300px">50</span>
<span class="t rg" style="left:284.00px;top:552.00px;letter-spacing:-0.245px">6 Октябрь 2001 г. 15:49</span>
<span class="t rb" style="left:551.20px;top:552.00px;letter-spacing:-0.500px">25</span>
<span class="t cat" style="left:108.80px;top:571.00px;letter-spacing:0.500px">Категория</span>
<span class="t cati" style="left:220.30px;top:571.00px;letter-spacing:0.620px">Категория 2</span>
<span class="t hd" style="left:74.00px;top:588.00px;letter-spacing:-0.233px">Специалист</span>
<span class="t hd" style="left:274.50px;top:588.00px;letter-spacing:-0.173px">Время завершения сессии</span>
<span class="t hd" style="left:539.20px;top:588.00px;letter-spacing:0.082px">Результат, %</span>
</div></div>
<!-- status bar -->
<div class="abs" style="left:0;top:583px;width:40px;height:17px;border:1px solid;border-color:#848284 #fff #fff #848284"></div>
<div class="abs" style="left:42px;top:583px;width:758px;height:17px;border:1px solid;border-color:#848284 #fff #fff #848284"></div>
<span class="ui" style="left:3px;top:596px">3300%</span>
<span class="ui" style="left:44px;top:596px;letter-spacing:-.3px">Page 1 of 2</span>
</body></html>
